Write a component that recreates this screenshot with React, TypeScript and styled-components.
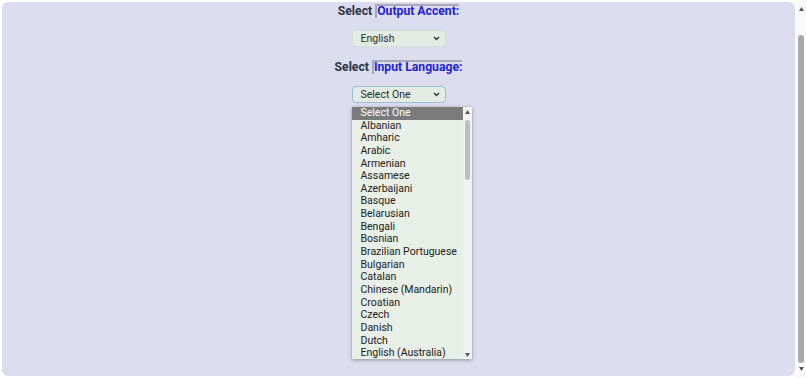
import React from "react";
import styled, { createGlobalStyle } from "styled-components";

const Global = createGlobalStyle`
  html, body { margin: 0; padding: 0; background: #ffffff; }
  body { font-family: Roboto, "Liberation Sans", sans-serif; }
`;

const Frame = styled.div`
  display: flex;
  height: 378px;
  overflow: hidden;
`;

const Page = styled.div`
  flex: 1;
  margin: 2px 1px 2px 2px;
  background: #dcdcef;
  border-radius: 6px;
  display: flex;
  flex-direction: column;
  align-items: center;
  padding-top: 1px;
  box-sizing: border-box;
`;

const PageScroll = styled.div`
  width: 10px;
  background: #fafafa;
  display: flex;
  flex-direction: column;
  align-items: center;
  padding: 7px 0 7px;
  box-sizing: border-box;
`;

const PageThumb = styled.div`
  width: 6px;
  flex: 1;
  margin: 24px 0 4px;
  border-radius: 3px;
  background: #a9a9a9;
`;

const Heading = styled.h2<{ $gap?: number }>`
  margin: ${(p) => p.$gap ?? 0}px 0 0 0;
  font-size: 12.2px;
  font-weight: 700;
  color: #2a3245;
  line-height: 16px;
`;

const Mark = styled.span`
  color: #2323d2;
  box-shadow: inset 2px 2px 0 #a9a9b9;
  padding-left: 2px;
`;

const SelectBox = styled.div<{ $focused?: boolean; $gap: number }>`
  margin-top: ${(p) => p.$gap}px;
  width: 94px;
  height: 17px;
  box-sizing: border-box;
  background: #e3ebe2;
  border: 1px solid ${(p) => (p.$focused ? "#9dbfd6" : "#d6ddd2")};
  border-radius: 4px;
  display: flex;
  align-items: center;
  padding: 0 5px 0 8px;
  font-size: 10.5px;
  color: #2b2b2b;
  justify-content: space-between;
  position: relative;
`;

const Chevron = () => (
  <svg width="7" height="5" viewBox="0 0 7 5">
    <path d="M1 1 L3.5 3.5 L6 1" stroke="#333" strokeWidth="1.4" fill="none" />
  </svg>
);

const List = styled.div`
  position: absolute;
  top: 20px;
  left: -1px;
  width: 120px;
  height: 252px;
  background: #e8efe7;
  box-shadow: 0 1px 4px rgba(0, 0, 0, 0.35);
  display: flex;
  z-index: 5;
`;

const Items = styled.div`
  flex: 1;
  display: flex;
  flex-direction: column;
`;

const Item = styled.div<{ $sel?: boolean }>`
  height: 12.65px;
  line-height: 12.65px;
  padding-left: 9px;
  font-size: 10.5px;
  color: ${(p) => (p.$sel ? "#ffffff" : "#222222")};
  background: ${(p) => (p.$sel ? "#7a7a7a" : "transparent")};
  white-space: nowrap;
`;

const ScrollTrack = styled.div`
  width: 9px;
  display: flex;
  flex-direction: column;
  align-items: center;
  background: #f2f2f2;
`;

const Arrow = styled.div`
  height: 9px;
  display: flex;
  align-items: center;
  justify-content: center;
`;

const Thumb = styled.div`
  width: 5px;
  height: 60px;
  margin-top: 4px;
  border-radius: 3px;
  background: #bdbdbd;
`;

const Spacer = styled.div`
  flex: 1;
`;

const languages = [
  "Albanian",
  "Amharic",
  "Arabic",
  "Armenian",
  "Assamese",
  "Azerbaijani",
  "Basque",
  "Belarusian",
  "Bengali",
  "Bosnian",
  "Brazilian Portuguese",
  "Bulgarian",
  "Catalan",
  "Chinese (Mandarin)",
  "Croatian",
  "Czech",
  "Danish",
  "Dutch",
  "English (Australia)",
];

const UpTri = () => (
  <svg width="5" height="4" viewBox="0 0 5 4">
    <path d="M0 4 L2.5 0 L5 4Z" fill="#555" />
  </svg>
);
const DownTri = () => (
  <svg width="5" height="4" viewBox="0 0 5 4">
    <path d="M0 0 L2.5 4 L5 0Z" fill="#555" />
  </svg>
);

export default function App() {
  return (
    <>
      <Global />
      <Frame>
        <Page>
          <Heading>
            Select <Mark>Output Accent:</Mark>
          </Heading>
          <SelectBox $gap={11}>
            <span>English</span>
            <Chevron />
          </SelectBox>
          <Heading $gap={12}>
            Select <Mark>Input Language:</Mark>
          </Heading>
          <SelectBox $gap={11} $focused>
            <span>Select One</span>
            <Chevron />
            <List>
              <Items>
                <Item $sel>Select One</Item>
                {languages.map((l) => (
                  <Item key={l}>{l}</Item>
                ))}
              </Items>
              <ScrollTrack>
                <Arrow>
                  <UpTri />
                </Arrow>
                <Thumb />
                <Spacer />
                <Arrow>
                  <DownTri />
                </Arrow>
              </ScrollTrack>
            </List>
          </SelectBox>
        </Page>
        <PageScroll>
          <UpTri />
          <PageThumb />
          <DownTri />
        </PageScroll>
      </Frame>
    </>
  );
}
